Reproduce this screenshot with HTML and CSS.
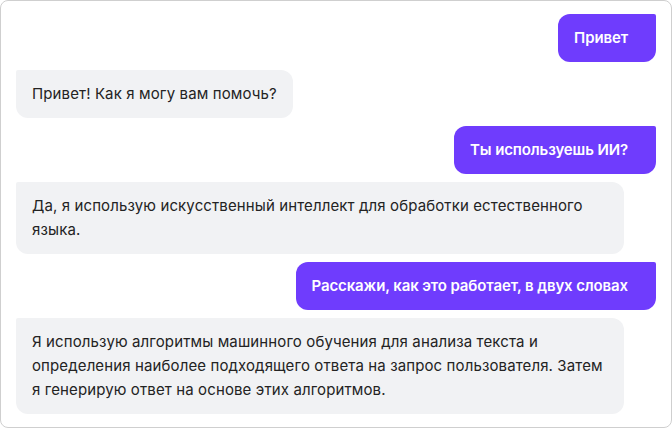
FILE: index.html
```
<!DOCTYPE html>
<html lang="ru">
<head>
<meta charset="utf-8">
<link rel="stylesheet" href="styles.css">
</head>
<body>
<div class="chat">
  <div class="msg user">Привет</div>
  <div class="msg bot">Привет! Как я могу вам помочь?</div>
  <div class="msg user">Ты используешь ИИ?</div>
  <div class="msg bot">Да, я использую искусственный интеллект для обработки естественного языка.</div>
  <div class="msg user">Расскажи, как это работает, в двух словах</div>
  <div class="msg bot">Я использую алгоритмы машинного обучения для анализа текста и определения наиболее подходящего ответа на запрос пользователя. Затем я генерирую ответ на основе этих алгоритмов.</div>
</div>
</body>
</html>
```
FILE: styles.css
```
html, body {
  margin: 0;
  padding: 0;
  background: #ffffff;
}
.chat {
  box-sizing: border-box;
  width: 672px;
  height: 428px;
  border: 1px solid #cfcfcf;
  border-radius: 8px;
  padding: 13px 15px 13px 15px;
  display: flex;
  flex-direction: column;
  gap: 8px;
  font-family: Inter, "Noto Sans", sans-serif;
  font-size: 15px;
  line-height: 24px;
}
.msg {
  padding: 12px 16px;
  border-radius: 12px;
  max-width: 576px;
}
.user {
  align-self: flex-end;
  background: #6f3cfd;
  color: #ffffff;
  font-weight: 600;
  letter-spacing: -0.12px;
  padding-right: 28px;
  border-top-right-radius: 2px;
}
.bot {
  align-self: flex-start;
  background: #f1f2f4;
  color: #232323;
  letter-spacing: 0.12px;
  border-top-left-radius: 2px;
}
```
